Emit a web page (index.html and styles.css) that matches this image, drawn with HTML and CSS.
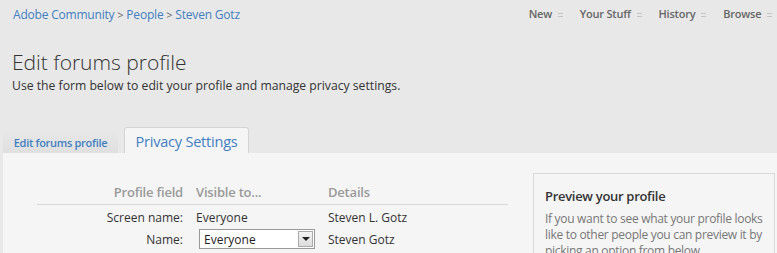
FILE: index.html
```html
<!DOCTYPE html>
<html lang="en">
<head>
  <meta charset="UTF-8" />
  <title>Edit forums profile</title>
  <link rel="stylesheet" href="styles.css">
</head>
<body>
  <div class="topbar">
    <div class="crumbs">
      <a href="#">Adobe Community</a> <span class="sep">&gt;</span>
      <a href="#">People</a> <span class="sep">&gt;</span>
      <a href="#">Steven Gotz</a>
    </div>
    <ul class="nav">
      <li>New <span class="caret"></span></li>
      <li>Your Stuff <span class="caret"></span></li>
      <li>History <span class="caret"></span></li>
      <li>Browse <span class="caret"></span></li>
    </ul>
  </div>

  <div class="head">
    <h1>Edit forums profile</h1>
    <p>Use the form below to edit your profile and manage privacy settings.</p>
  </div>

  <div class="tabs">
    <a class="tab" href="#">Edit forums profile</a>
    <a class="tab active" href="#">Privacy Settings</a>
  </div>

  <div class="panel">
    <table class="fields">
      <tr class="hdr">
        <th class="lbl">Profile field</th>
        <th>Visible to...</th>
        <th>Details</th>
      </tr>
      <tr>
        <td class="lbl">Screen name:</td>
        <td>Everyone</td>
        <td>Steven L. Gotz</td>
      </tr>
      <tr>
        <td class="lbl">Name:</td>
        <td>
          <div class="select">
            <span>Everyone</span>
            <span class="drop"></span>
          </div>
        </td>
        <td>Steven Gotz</td>
      </tr>
    </table>

    <div class="preview">
      <h3>Preview your profile</h3>
      <p>If you want to see what your profile looks like to other people you can preview it by picking an option from below.</p>
    </div>
  </div>
</body>
</html>
```

FILE: styles.css
```css
body {
  margin: 0;
  background: #e8e8e8;
  font-family: 'Open Sans', sans-serif;
  color: #333;
  font-size: 12px;
  overflow: hidden;
  height: 253px;
}

a { text-decoration: none; }

.topbar {
  display: flex;
  justify-content: space-between;
  align-items: center;
  height: 29px;
  padding: 0 5px 0 13px;
}

.crumbs { font-size: 12px; letter-spacing: -0.2px; }
.crumbs a { color: #3f7fc1; }
.crumbs .sep { color: #666; font-size: 11px; }

.nav {
  display: flex;
  list-style: none;
  margin: 0 0 2px;
  padding: 0;
  gap: 17px;
}

.nav li {
  font-size: 11px;
  font-weight: 600;
  color: #666;
  letter-spacing: -0.2px;
}

.caret {
  display: inline-block;
  width: 5px;
  height: 2px;
  border-top: 1px solid #c4c4c4;
  border-bottom: 1px solid #c4c4c4;
  margin-left: 3px;
  vertical-align: middle;
}

.head { padding: 19px 0 0 12px; }

.head h1 {
  margin: 0;
  font-size: 21px;
  font-weight: 300;
  color: #333;
  line-height: 28px;
}

.head p {
  margin: 0;
  font-size: 12.2px;
  line-height: 20px;
}

.tabs {
  display: flex;
  align-items: flex-end;
  margin: 31px 0 0 3px;
  gap: 6px;
}

.tab {
  display: block;
  color: #3f7fc1;
}

.tab:first-child {
  width: 115px;
  height: 23px;
  line-height: 25px;
  text-align: center;
  font-size: 11px;
  font-weight: 600;
  letter-spacing: -0.3px;
  background: linear-gradient(#e8e8e8, #dfdfdf);
  box-sizing: border-box;
}

.tab.active {
  width: 125px;
  height: 26px;
  line-height: 28px;
  text-align: center;
  font-size: 14.5px;
  letter-spacing: -0.2px;
  background: #f5f5f5;
  border: 1px solid #d4d4d4;
  border-bottom: none;
  border-radius: 3px 3px 0 0;
  box-sizing: border-box;
}

.panel {
  display: flex;
  align-items: flex-start;
  margin-left: 3px;
  background: #f5f5f5;
  height: 200px;
}

.fields {
  margin: 26px 0 0 34px;
  width: 471px;
  border-collapse: collapse;
  font-size: 12px;
}

.fields th, .fields td {
  padding: 0;
  text-align: left;
  vertical-align: middle;
}

.fields th {
  font-size: 13px;
  font-weight: 600;
  color: #9a9a9a;
  letter-spacing: -0.2px;
  height: 25px;
  border-bottom: 1px solid #d8d8d8;
}

.fields td { height: 22px; }
.fields tr:nth-child(2) td { padding-top: 1px; }

.fields .lbl {
  width: 146px;
  text-align: right;
  padding-right: 13px;
}

.fields th:nth-child(2), .fields td:nth-child(2) { width: 132px; }

.select {
  display: flex;
  align-items: center;
  justify-content: space-between;
  width: 116px;
  height: 20px;
  margin-left: 3px;
  box-sizing: border-box;
  border: 1px solid #999;
  background: #fff;
  padding-left: 4px;
  color: #222;
}

.drop {
  width: 15px;
  height: 16px;
  margin-right: 1px;
  background: linear-gradient(#f4f4f4, #dcdcdc);
  border: 1px solid #aaa;
  box-sizing: border-box;
  position: relative;
}

.drop::after {
  content: "";
  position: absolute;
  left: 3px;
  top: 5px;
  border-left: 4px solid transparent;
  border-right: 4px solid transparent;
  border-top: 4px solid #222;
}

.preview {
  margin: 20px 0 0 25px;
  width: 242px;
  height: 100px;
  box-sizing: border-box;
  border: 1px solid #dadada;
  padding: 12px 6px 0 11px;
}

.preview h3 {
  margin: 0 0 5px;
  font-size: 13px;
  font-weight: 600;
  color: #333;
  letter-spacing: -0.3px;
  line-height: 20px;
}

.preview p {
  margin: 0;
  font-size: 12px;
  line-height: 16px;
  color: #777;
  letter-spacing: -0.3px;
}
```
